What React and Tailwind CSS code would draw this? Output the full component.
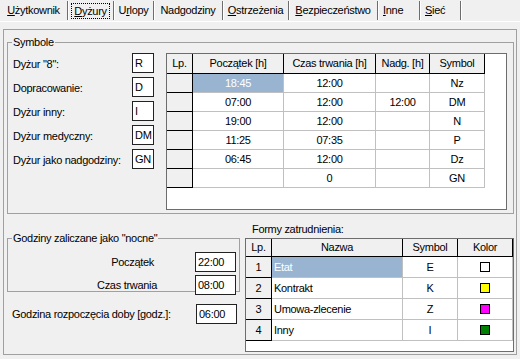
import React from 'react'

const tabs = [
  { pre: '', key: 'U', post: 'żytkownik', w: 68 },
  { pre: '', key: 'D', post: 'yżury', w: 46, active: true },
  { pre: 'U', key: 'r', post: 'lopy', w: 40 },
  { pre: 'Nadgodziny', key: '', post: '', w: 69 },
  { pre: '', key: 'O', post: 'strzeżenia', w: 66 },
  { pre: '', key: 'B', post: 'ezpieczeństwo', w: 89 },
  { pre: '', key: 'I', post: 'nne', w: 42, left: true },
  { pre: '', key: 'S', post: 'ieć', w: 41, left: true },
]

const shifts = [
  ['18:45', '12:00', '', 'Nz'],
  ['07:00', '12:00', '12:00', 'DM'],
  ['19:00', '12:00', '', 'N'],
  ['11:25', '07:35', '', 'P'],
  ['06:45', '12:00', '', 'Dz'],
  ['', '0', '', 'GN'],
]

const forms = [
  ['1', 'Etat', 'E', 'bg-white'],
  ['2', 'Kontrakt', 'K', 'bg-[#ffff00]'],
  ['3', 'Umowa-zlecenie', 'Z', 'bg-[#ff00ff]'],
  ['4', 'Inny', 'I', 'bg-[#008000]'],
]

const symbols = [
  ['Dyżur "8":', 'R'],
  ['Dopracowanie:', 'D'],
  ['Dyżur inny:', 'I'],
  ['Dyżur medyczny:', 'DM'],
  ['Dyżur jako nadgodziny:', 'GN'],
]

function Edit({ value, w = 'w-[22px]' }) {
  return (
    <div className={`${w} h-[20px] bg-white border border-[#222] pl-[2px] flex items-center leading-[13px]`}>
      {value}
    </div>
  )
}

function Group({ title, className, children }) {
  return (
    <div className={`relative border border-[#a0a0a0] ${className}`}>
      <span className="absolute left-[4px] top-[-7px] px-[1px] bg-[#f0f0f0] leading-[13px]">{title}</span>
      {children}
    </div>
  )
}

const fixed = 'bg-[#f0f0f0] border-r border-b border-black flex items-center justify-center'
const cell = 'border-r border-b border-[#c0c0c0] flex items-center justify-center'

export default function App() {
  const cols = ['w-[91px]', 'w-[92px]', 'w-[54px]', 'w-[55px]']
  return (
    <div className="w-[520px] h-[359px] bg-[#f0f0f0] text-black text-[11px] leading-[13px] tracking-[-0.3px] font-['Liberation_Sans',Arial,sans-serif] overflow-hidden">
      {/* zakładki */}
      <div className="flex h-[21px] pt-[1px]">
        {tabs.map((t, i) => (
          <div key={i} style={{ width: t.w }}
            className={`h-[19px] border-r border-[#6d6d6d] shadow-[1px_0_0_#fff] flex items-center ${t.left ? 'pl-[5px]' : 'justify-center'}`}>
            <span className={t.active ? 'border border-dotted border-black px-[2px] leading-[14px]' : ''}>
              {t.pre}<span className="underline underline-offset-[1px]">{t.key}</span>{t.post}
            </span>
          </div>
        ))}
      </div>
      <div className="h-px bg-white" />

      <div className="ml-[3px] mt-[7px] w-[514px] h-[326px] border border-[#a0a0a0]">
        {/* Symbole */}
        <Group title="Symbole" className="ml-[3px] mt-[12px] w-[507px] h-[172px]">
          <div className="flex pt-[10px] pl-[5px]">
            <div className="w-[141px] flex flex-col gap-[4px]">
              {symbols.map(([l, v]) => (
                <div key={l} className="flex items-center justify-between h-[20px]">
                  <span className="pt-[2px]">{l}</span>
                  <Edit value={v} />
                </div>
              ))}
            </div>
            <div className="ml-[12px] w-[341px] h-[157px] border border-[#6d6d6d] bg-white">
              <div className="flex h-[20px]">
                <div className={`w-[26px] ${fixed}`}>Lp.</div>
                {['Początek [h]', 'Czas trwania [h]', 'Nadg. [h]', 'Symbol'].map((h, i) => (
                  <div key={h} className={`${cols[i]} ${fixed}`}>{h}</div>
                ))}
              </div>
              {shifts.map((r, ri) => (
                <div key={ri} className="flex h-[19px]">
                  <div className={`w-[26px] ${fixed}`} />
                  {r.map((v, i) => (
                    <div key={i} className={`${cols[i]} ${cell}`}>
                      <div className={`w-full h-full flex items-center justify-center ${ri === 0 && i === 0 ? 'bg-[#99b4d1] text-white' : ''}`}>{v}</div>
                    </div>
                  ))}
                </div>
              ))}
            </div>
          </div>
        </Group>

        <div className="flex">
          {/* lewa kolumna */}
          <div className="w-[241px]">
            <Group title={'Godziny zaliczane jako "nocne"'} className="ml-[3px] mt-[24px] w-[233px] h-[54px]">
              <div className="pt-[13px] flex flex-col gap-[3px]">
                <div className="flex items-center h-[20px]">
                  <span className="w-[146px] text-right">Początek</span>
                  <div className="ml-[41px] relative"><Edit value="22:00" w="w-[41px]" /></div>
                </div>
                <div className="flex items-center h-[20px]">
                  <span className="w-[149px] text-right">Czas trwania</span>
                  <div className="ml-[38px] relative"><Edit value="08:00" w="w-[41px]" /></div>
                </div>
              </div>
            </Group>
            <div className="mt-[12px] pl-[8px] pr-[8px] flex items-center justify-between">
              <span>Godzina rozpoczęcia doby [godz.]:</span>
              <Edit value="06:00" w="w-[41px]" />
            </div>
          </div>

          {/* prawa kolumna */}
          <div className="w-[269px]">
            <div className="mt-[9px] pl-[7px]">Formy zatrudnienia:</div>
            <div className="mt-[2px] w-[269px] h-[114px] border border-[#6d6d6d] bg-white">
              <div className="flex h-[18px]">
                <div className={`w-[26px] ${fixed}`}>Lp.</div>
                <div className={`w-[131px] ${fixed}`}>Nazwa</div>
                <div className={`w-[55px] ${fixed}`}>Symbol</div>
                <div className={`w-[55px] ${fixed}`}>Kolor</div>
              </div>
              {forms.map(([n, name, sym, color], ri) => (
                <div key={n} className="flex h-[21px]">
                  <div className={`w-[26px] ${fixed}`}>{n}</div>
                  <div className="w-[131px] border-r border-b border-[#c0c0c0]">
                    <div className={`h-full flex items-center pl-[2px] ${ri === 0 ? 'bg-[#99b4d1] text-white' : ''}`}>{name}</div>
                  </div>
                  <div className={`w-[55px] ${cell}`}>{sym}</div>
                  <div className={`w-[55px] ${cell}`}>
                    <div className={`w-[10px] h-[10px] border border-black ${color}`} />
                  </div>
                </div>
              ))}
            </div>
          </div>
        </div>
      </div>
    </div>
  )
}
